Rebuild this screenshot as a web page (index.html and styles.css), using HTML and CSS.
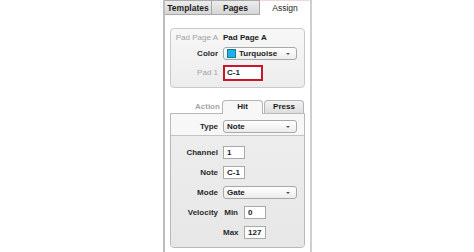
FILE: index.html
```html
<!DOCTYPE html>
<html>
<head>
<meta charset="utf-8">
<link rel="stylesheet" href="styles.css">
</head>
<body>
<div class="panel">
  <div class="tabs">
    <div class="tab tab-off tab-first">Templates</div>
    <div class="tab tab-off">Pages</div>
    <div class="tab tab-on">Assign</div>
  </div>

  <div class="group">
    <div class="form form-top">
      <div class="lbl lbl-dim">Pad Page A</div>
      <div class="val">Pad Page A</div>

      <div class="lbl">Color</div>
      <div class="select">
        <span class="swatch"></span><span class="sel-text">Turquoise</span>
        <span class="caret"></span>
      </div>

      <div class="lbl lbl-dim">Pad 1</div>
      <div class="input input-red">C-1</div>
    </div>
  </div>

  <div class="subtabs">
    <div class="subtab-label">Action</div>
    <div class="subtab subtab-on">Hit</div>
    <div class="subtab subtab-off">Press</div>
  </div>
  <div class="box">
    <div class="box-top">
      <div class="form">
        <div class="lbl">Type</div>
        <div class="select"><span class="sel-text">Note</span><span class="caret"></span></div>
      </div>
    </div>
    <div class="box-bottom">
      <div class="form form-rows">
        <div class="lbl">Channel</div>
        <div class="input input-small">1</div>

        <div class="lbl">Note</div>
        <div class="input input-small">C-1</div>

        <div class="lbl">Mode</div>
        <div class="select"><span class="sel-text">Gate</span><span class="caret"></span></div>

        <div class="lbl">Velocity</div>
        <div class="pair"><span class="sublbl">Min</span><div class="input input-small">0</div></div>

        <div class="lbl"></div>
        <div class="pair"><span class="sublbl">Max</span><div class="input input-small">127</div></div>
      </div>
    </div>
  </div>
</div>
</body>
</html>
```
FILE: styles.css
```css
html, body {
  margin: 0;
  padding: 0;
  background: #ffffff;
}
body {
  font-family: "Liberation Sans", Arial, sans-serif;
  font-size: 8px;
  color: #222;
}
.panel {
  margin-left: 163px;
  width: 145px;
  height: 252px;
  border-left: 2px solid #bdbdbd;
  border-right: 2px solid #cfcfcf;
}
.tabs {
  display: flex;
  height: 15px;
}
.tab {
  box-sizing: border-box;
  height: 15px;
  line-height: 14px;
  text-align: center;
  font-size: 8.5px;
}
.tab-off {
  width: 48px;
  font-weight: bold;
  color: #1e1e1e;
  background: linear-gradient(#ececec, #d6d6d6);
  border: 1px solid #a9a9a9;
  border-left: none;
}
.tab-first {
  width: 47px;
}
.tab-on {
  flex: 1;
  background: #fff;
  color: #1e1e1e;
  border-top: 1px solid #f3d6dc;
}
.group {
  margin: 13px 5px 0 5px;
  height: 60px;
  box-sizing: border-box;
  border: 1px solid #c9c9c9;
  border-radius: 4px;
  background: linear-gradient(#f7f7f7, #ededed);
  padding-top: 2px;
}
.form {
  display: grid;
  grid-template-columns: 47px 74px;
  column-gap: 5px;
  align-items: center;
}
.form-top {
  grid-template-rows: 12px 14px 16px;
  row-gap: 3px;
}
.form-top > :nth-child(5), .form-top > :nth-child(6) {
  margin-top: 3px;
}
.lbl {
  text-align: right;
  font-weight: bold;
  color: #2a2a2a;
  white-space: nowrap;
}
.lbl-dim {
  font-weight: normal;
  color: #a3a3a3;
}
.val {
  font-weight: bold;
  color: #1a1a1a;
  white-space: nowrap;
}
.select {
  position: relative;
  box-sizing: border-box;
  height: 13px;
  border: 1px solid #a8a8a8;
  border-radius: 3px;
  background: linear-gradient(#ffffff, #ececec);
  display: flex;
  align-items: center;
  padding-left: 3px;
  font-weight: bold;
  color: #1a1a1a;
}
.swatch {
  width: 7px;
  height: 7px;
  background: #1fb0e6;
  border: 1px solid #1478a8;
  margin-right: 3px;
}
.caret {
  position: absolute;
  right: 6px;
  top: 5px;
  width: 0;
  height: 0;
  border-left: 2px solid transparent;
  border-right: 2px solid transparent;
  border-top: 2px solid #555;
}
.input {
  box-sizing: border-box;
  height: 14px;
  line-height: 12px;
  border: 1px solid #a9a9a9;
  background: #fff;
  padding-left: 3px;
  font-weight: bold;
  color: #1a1a1a;
}
.input-red {
  width: 40px;
  height: 16px;
  line-height: 12px;
  border: 2px solid #c9162b;
  padding-left: 2px;
}
.input-small {
  width: 22px;
  height: 13px;
  line-height: 11px;
}
.subtabs {
  margin: 12px 5px 0 5px;
  display: flex;
  height: 13px;
  align-items: flex-end;
}
.subtab-label {
  width: 52px;
  box-sizing: border-box;
  padding-left: 25px;
  line-height: 13px;
  color: #a5a5a5;
  font-weight: bold;
}
.subtab {
  box-sizing: border-box;
  height: 13px;
  line-height: 12px;
  text-align: center;
  font-weight: bold;
  border: 1px solid #b4b4b4;
  border-bottom: none;
  border-radius: 4px 4px 0 0;
}
.subtab-on {
  width: 41px;
  background: #f7f7f7;
  color: #1a1a1a;
  height: 14px;
  margin-bottom: -1px;
  position: relative;
}
.subtab-off {
  width: 40px;
  margin-left: 1px;
  background: linear-gradient(#f2f2f2, #dddddd);
  color: #1a1a1a;
}
.box {
  margin: 0 5px;
  height: 135px;
  box-sizing: border-box;
  border: 1px solid #b9b9b9;
  border-radius: 0 0 4px 4px;
  overflow: hidden;
}
.box-top {
  height: 22px;
  box-sizing: border-box;
  padding-top: 6px;
  background: #f7f7f7;
  border-bottom: 1px solid #c4c4c4;
}
.box-bottom {
  height: 111px;
  box-sizing: border-box;
  padding-top: 10px;
  background: linear-gradient(#ededed, #e7e7e7);
}
.form-rows {
  grid-template-rows: repeat(5, 13px);
  row-gap: 7px;
}
.pair {
  display: flex;
  align-items: center;
}
.sublbl {
  width: 15px;
  text-align: right;
  margin-right: 6px;
  font-weight: bold;
  color: #2a2a2a;
}
```
